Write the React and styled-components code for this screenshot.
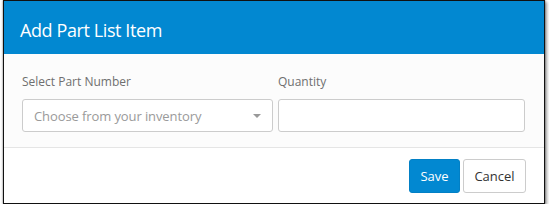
import React from "react";
import styled, { createGlobalStyle } from "styled-components";

const GlobalStyle = createGlobalStyle`
  body {
    margin: 0;
    background: #ffffff;
    font-family: "Open Sans", "Noto Sans", sans-serif;
  }
`;

const Modal = styled.div`
  width: 540px;
  margin-left: 3px;
  border: 1px solid #111;
  background: #fff;
  box-shadow: 0 0 2px rgba(0, 0, 0, 0.55), 2px 2px 3px rgba(0, 0, 0, 0.35);
`;

const Header = styled.div`
  height: 53px;
  background: #0288d1;
  display: flex;
  align-items: center;
  padding-left: 16px;
`;

const Title = styled.h2`
  margin: 0;
  color: #fff;
  font-size: 18px;
  font-weight: 400;
  letter-spacing: -0.4px;
  position: relative;
  top: 2px;
`;

const Body = styled.div`
  background: #fcfcfc;
  padding: 19px 17px 14px 18px;
  display: grid;
  grid-template-columns: 251px 247px;
  column-gap: 5px;
  height: 60px;
`;

const Field = styled.div`
  display: flex;
  flex-direction: column;
`;

const Label = styled.label`
  font-size: 12px;
  color: #6f6f6f;
  line-height: 18px;
  margin-bottom: 8px;
`;

const Box = styled.div`
  height: 31px;
  border: 1px solid #ccc;
  border-radius: 3px;
  background: #fff;
  display: flex;
  align-items: center;
  justify-content: space-between;
  padding: 0 10px 0 11px;
  box-sizing: content-box;
`;

const Placeholder = styled.span`
  font-size: 13px;
  color: #9a9a9a;
  letter-spacing: -0.1px;
`;

const Caret = styled.span`
  width: 0;
  height: 0;
  border-left: 4px solid transparent;
  border-right: 4px solid transparent;
  border-top: 4px solid #999;
  margin-right: 1px;
`;

const Footer = styled.div`
  border-top: 1px solid #e5e5e5;
  display: flex;
  justify-content: flex-end;
  gap: 3px;
  padding: 11px 18px 10px 0;
`;

const Button = styled.button`
  height: 34px;
  width: ${(p) => (p.$primary ? "51px" : "63px")};
  padding: 0;
  font-family: "Open Sans", "Noto Sans", sans-serif;
  font-size: 13px;
  border-radius: 3px;
  border: 1px solid ${(p) => (p.$primary ? "#0280c5" : "#ccc")};
  background: ${(p) => (p.$primary ? "#0288d1" : "#fff")};
  color: ${(p) => (p.$primary ? "#fff" : "#333")};
  cursor: pointer;
`;

export default function App() {
  return (
    <>
      <GlobalStyle />
      <Modal>
        <Header>
          <Title>Add Part List Item</Title>
        </Header>
        <Body>
          <Field>
            <Label>Select Part Number</Label>
            <Box>
              <Placeholder>Choose from your inventory</Placeholder>
              <Caret />
            </Box>
          </Field>
          <Field>
            <Label>Quantity</Label>
            <Box />
          </Field>
        </Body>
        <Footer>
          <Button $primary>Save</Button>
          <Button>Cancel</Button>
        </Footer>
      </Modal>
    </>
  );
}
